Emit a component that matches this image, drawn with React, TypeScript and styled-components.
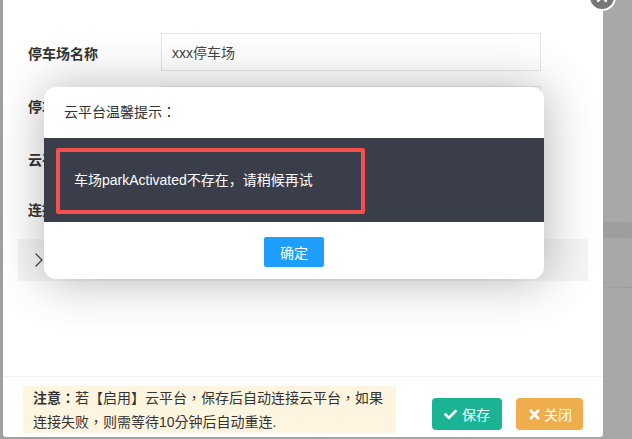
import React from 'react'
import styled, {createGlobalStyle} from "styled-components";
import {FaCheck, FaTimes} from "react-icons/fa";
import {ChevronRight, X} from "lucide-react";

const GlobalStyle = createGlobalStyle`
  html, body {
    margin: 0;
    padding: 0;
    height: 100%;
    overflow: hidden;
  }
  body {
    font-family: "Liberation Sans", "Noto Sans CJK SC", sans-serif;
    color: #333333;
  }
`
const Page = styled.div`
  position: relative;
  width: 632px;
  height: 439px;
  overflow: hidden;
  background: linear-gradient(90deg, #a0a0a0, #a8a8a8);
  padding-left: 3px;
  box-sizing: border-box;
`
const BehindStripe = styled.div<{$top: number; $height: number}>`
  position: absolute;
  left: 0;
  right: 0;
  top: ${props => props.$top}px;
  height: ${props => props.$height}px;
  background-color: #9e9e9e;
`
const Panel = styled.section`
  position: relative;
  width: 600px;
  height: 437px;
  background-color: #ffffff;
  border-bottom-left-radius: 3px;
  border-bottom-right-radius: 3px;
  display: flex;
  flex-direction: column;
`
const CloseButton = styled.button`
  position: absolute;
  top: -17px;
  right: -13px;
  width: 24px;
  height: 24px;
  padding: 0;
  box-sizing: content-box;
  border: 2px solid #ffffff;
  border-radius: 50%;
  background-color: #777777;
  color: #ffffff;
  display: flex;
  align-items: center;
  justify-content: center;
`
const Form = styled.div`
  flex: 1;
  padding: 33px 15px 0;
  display: flex;
  flex-direction: column;
`
const Row = styled.div<{$height: number}>`
  height: ${props => props.$height}px;
  padding-left: 10px;
  display: flex;
  align-items: flex-start;
`
const Label = styled.label`
  width: 133px;
  line-height: 42px;
  font-size: 14px;
  font-weight: bold;
  color: #333333;
`
const Input = styled.div`
  width: 380px;
  height: 38px;
  line-height: 38px;
  box-sizing: border-box;
  border: 1px solid #e5e6e7;
  padding-left: 10px;
  font-size: 14px;
  color: #444444;
  background-color: #ffffff;
`
const Collapse = styled.div`
  height: 42px;
  width: 570px;
  background-color: #f5f5f5;
  display: flex;
  align-items: center;
  padding-left: 9px;
  box-sizing: border-box;
  color: #444444;
`
const Footer = styled.footer`
  height: 61px;
  box-sizing: border-box;
  border-top: 1px solid #f0f0f0;
  padding: 9px 20px 0;
  display: flex;
  gap: 36px;
`
const Notice = styled.div`
  width: 373px;
  height: 47px;
  box-sizing: border-box;
  padding: 0 10px;
  background-color: #fef5e0;
  font-family: "Liberation Sans", "Noto Sans CJK TC", sans-serif;
  font-size: 14px;
  line-height: 24px;
  color: #333333;
`
const Buttons = styled.div`
  padding-top: 12px;
  display: flex;
  gap: 14px;
  align-items: flex-start;
`
const Action = styled.button<{$color: string; $width: number; $gap: number}>`
  width: ${props => props.$width}px;
  height: 32px;
  border: 0;
  border-radius: 4px;
  padding: 0;
  background-color: ${props => props.$color};
  color: #ffffff;
  font-family: inherit;
  font-size: 14px;
  display: flex;
  align-items: center;
  justify-content: center;
  gap: ${props => props.$gap}px;
`
const Dialog = styled.div`
  position: absolute;
  left: 44px;
  top: 87px;
  width: 500px;
  height: 192px;
  background-color: #ffffff;
  border-radius: 12px;
  box-shadow: 1px 1px 50px rgba(0, 0, 0, 0.3);
  display: flex;
  flex-direction: column;
  overflow: hidden;
`
const DialogTitle = styled.div`
  height: 51px;
  line-height: 50px;
  padding-left: 20px;
  font-family: "Liberation Sans", "Noto Sans CJK TC", sans-serif;
  font-size: 14px;
  color: #333333;
  box-sizing: border-box;
`
const DialogBody = styled.div`
  height: 84px;
  padding: 10px 12px;
  box-sizing: border-box;
  background-color: #3a3d4a;
`
const Message = styled.div`
  width: 309px;
  height: 66px;
  box-sizing: border-box;
  border: 4px solid #f55050;
  border-radius: 2px;
  padding-left: 14px;
  font-size: 14px;
  line-height: 57px;
  color: #ffffff;
`
const DialogFooter = styled.div`
  flex: 1;
  display: flex;
  justify-content: center;
  padding-top: 15px;
`
const Confirm = styled.button`
  width: 60px;
  height: 30px;
  border: 0;
  padding: 0;
  border-radius: 2px;
  background-color: #1e9fff;
  color: #ffffff;
  font-family: inherit;
  font-size: 14px;
`

const fields = [
    {label: "停车场名称", value: "xxx停车场", height: 53},
    {label: "停车场编号", value: "", height: 53},
    {label: "云平台地址", value: "", height: 50},
    {label: "连接状态", value: "", height: 50},
]

const App = () => {
    return (
        <Page>
            <GlobalStyle/>
            <BehindStripe $top={222} $height={16}/>
            <BehindStripe $top={287} $height={1}/>
            <Panel>
                <CloseButton aria-label="close"><X size={16} strokeWidth={3.5}/></CloseButton>
                <Form>
                    {fields.map(field =>
                        <Row key={field.label} $height={field.height}>
                            <Label>{field.label}</Label>
                            {field.height === 53 && <Input>{field.value}</Input>}
                        </Row>
                    )}
                    <Collapse><ChevronRight size={24} strokeWidth={1.25}/></Collapse>
                </Form>
                <Footer>
                    <Notice>
                        <b>注意：</b>若【启用】云平台，保存后自动连接云平台，如果连接失败，则需等待10分钟后自动重连.
                    </Notice>
                    <Buttons>
                        <Action $color="#1ab394" $width={70} $gap={5}><FaCheck size={13}/>保存</Action>
                        <Action $color="#f0ad4e" $width={67} $gap={2}><FaTimes size={15}/>关闭</Action>
                    </Buttons>
                </Footer>
            </Panel>
            <Dialog>
                <DialogTitle>云平台温馨提示：</DialogTitle>
                <DialogBody>
                    <Message>车场parkActivated不存在，请稍候再试</Message>
                </DialogBody>
                <DialogFooter>
                    <Confirm>确定</Confirm>
                </DialogFooter>
            </Dialog>
        </Page>
    )
}

export default App
